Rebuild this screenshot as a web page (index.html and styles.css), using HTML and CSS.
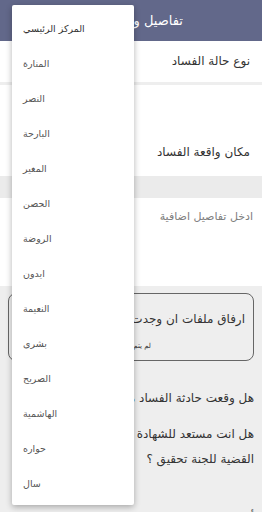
FILE: index.html
```html
<!DOCTYPE html>
<html lang="ar" dir="rtl">
<head>
    <meta charset="UTF-8">
    <meta name="viewport" content="width=device-width, initial-scale=1.0">
    <title>تفاصيل واقعة الفساد</title>
    <link rel="stylesheet" href="styles.css">
</head>
<body>
    <!-- Top bar -->
    <header class="top-bar">
        <span class="top-title">تفاصيل واقعة الفساد</span>
    </header>

    <!-- Form fields -->
    <div class="field field-type">نوع حالة الفساد</div>
    <div class="field field-place">مكان واقعة الفساد</div>
    <div class="band"></div>
    <div class="field field-details">ادخل تفاصيل اضافية</div>

    <div class="grey-area">
        <div class="attach-box">
            <div class="attach-title">ارفاق ملفات ان وجدت</div>
            <div class="attach-note">لم يتم اختيار اي ملف</div>
        </div>

        <p class="question q-one">هل وقعت حادثة الفساد معك شخصيا ؟</p>
        <p class="question q-two">هل انت مستعد للشهادة في هذه<br>القضية للجنة تحقيق ؟</p>
        <p class="question q-three">أو تكون الشكوى سرية او علنية</p>
    </div>

    <!-- Dropdown list -->
    <ul class="menu">
        <li class="menu-item first">المركز الرئيسي</li>
        <li class="menu-item">المنارة</li>
        <li class="menu-item">النصر</li>
        <li class="menu-item">البارحة</li>
        <li class="menu-item">المغير</li>
        <li class="menu-item">الحصن</li>
        <li class="menu-item">الروضة</li>
        <li class="menu-item">ايدون</li>
        <li class="menu-item">النعيمة</li>
        <li class="menu-item">بشرى</li>
        <li class="menu-item">الصريح</li>
        <li class="menu-item">الهاشمية</li>
        <li class="menu-item">حواره</li>
        <li class="menu-item">سال</li>
    </ul>
</body>
</html>
```

FILE: styles.css
```css
/* General Styles */
body {
    margin: 0;
    width: 262px;
    height: 512px;
    overflow: hidden;
    position: relative;
    font-family: "DejaVu Sans", sans-serif;
    background-color: #eeeeee;
    color: #333333;
}

.top-bar {
    height: 41px;
    background-color: #62688a;
    display: flex;
    align-items: center;
    padding-right: 79px;
}

.top-title {
    color: #ffffff;
    font-size: 13px;
    white-space: nowrap;
}

.field {
    background-color: #ffffff;
    font-size: 12px;
    padding-right: 12px;
    white-space: nowrap;
}

.field-type {
    height: 41px;
    line-height: 41px;
    margin-bottom: 3px;
}

.field-place {
    height: 91px;
    box-sizing: border-box;
    padding-top: 58px;
    line-height: 18px;
}

.band {
    height: 22px;
    background-color: #ebebeb;
}

.field-details {
    height: 88px;
    box-sizing: border-box;
    padding-top: 11px;
    padding-right: 9px;
    line-height: 16px;
    color: #808080;
    font-size: 11px;
}

.grey-area {
    padding: 7px 8px 0 8px;
}

.attach-box {
    height: 68px;
    box-sizing: border-box;
    border: 1px solid #666666;
    border-radius: 8px;
    padding: 16px 8px 0 10px;
    white-space: nowrap;
}

.attach-title {
    font-size: 12px;
    line-height: 18px;
}

.attach-note {
    font-size: 7px;
    margin-top: 14px;
    padding-right: 94px;
    color: #333333;
}

.question {
    margin: 0;
    font-size: 12px;
    line-height: 25px;
    white-space: nowrap;
}

.q-one {
    margin-top: 25px;
}

.q-two {
    margin-top: 11px;
}

.q-three {
    margin-top: 33px;
}

/* Dropdown overlay */
.menu {
    position: absolute;
    top: 5px;
    left: 12px;
    width: 122px;
    height: 500px;
    margin: 0;
    padding: 6px 0 0 0;
    box-sizing: border-box;
    list-style: none;
    background-color: #ffffff;
    box-shadow: 0 2px 6px rgba(0, 0, 0, 0.3);
    border-radius: 2px;
}

.menu-item {
    height: 35px;
    line-height: 35px;
    font-size: 9.5px;
    color: #555555;
    text-align: left;
    padding-left: 11px;
    white-space: nowrap;
}

.menu-item.first {
    color: #333333;
}
```
